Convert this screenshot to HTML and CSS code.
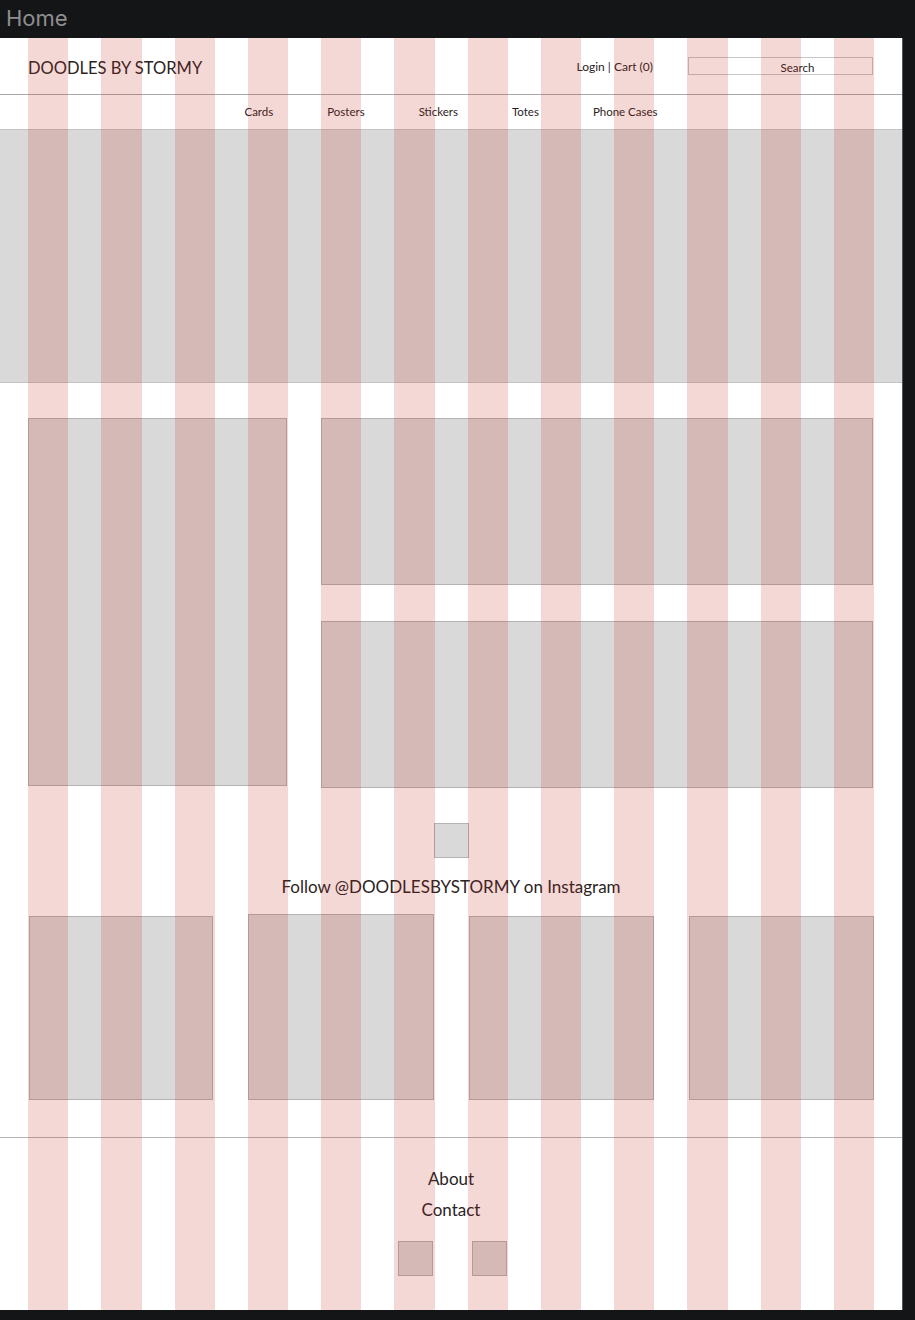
FILE: index.html
```html
<!DOCTYPE html>
<html lang="en">
<head>
    <meta charset="UTF-8">
    <meta name="viewport" content="width=device-width, initial-scale=1.0">
    <title>Home</title>
    <link rel="stylesheet" href="styles.css">
</head>
<body>
    <div class="frame-label">Home</div>
    <div class="frame">
        <header class="header">
            <div class="logo">DOODLES BY STORMY</div>
            <div class="account">Login | Cart (0)</div>
            <div class="search">Search</div>
        </header>
        <nav class="nav">
            <a href="#">Cards</a>
            <a href="#">Posters</a>
            <a href="#">Stickers</a>
            <a href="#">Totes</a>
            <a href="#">Phone Cases</a>
        </nav>
        <div class="hero"></div>

        <section class="features">
            <div class="box feature-tall"></div>
            <div class="box feature-wide"></div>
            <div class="box feature-wide"></div>
        </section>

        <section class="insta">
            <div class="box insta-icon"></div>
            <p class="insta-text">Follow @DOODLESBYSTORMY on Instagram</p>
            <div class="insta-grid">
                <div class="box tile"></div>
                <div class="box tile tile-raised"></div>
                <div class="box tile"></div>
                <div class="box tile"></div>
            </div>
        </section>

        <footer class="footer">
            <a href="#">About</a>
            <a href="#">Contact</a>
            <div class="socials">
                <div class="box social"></div>
                <div class="box social"></div>
            </div>
        </footer>

        <div class="grid-overlay">
            <span></span><span></span><span></span><span></span>
            <span></span><span></span><span></span><span></span>
            <span></span><span></span><span></span><span></span>
        </div>
    </div>
</body>
</html>
```

FILE: styles.css
```css
body {
    margin: 0;
    background: #141517;
    font-family: Lato, "Noto Sans", sans-serif;
    color: #2b2323;
    height: 1320px;
    overflow: hidden;
}

.frame-label {
    height: 38px;
    padding-left: 6px;
    font-family: Inter, sans-serif;
    font-size: 22px;
    line-height: 36px;
    color: #8e8e8e;
}

.frame {
    position: relative;
    width: 902px;
    height: 1272px;
    background: #fff;
    border-right: 1px solid #555;
}

a {
    color: inherit;
    text-decoration: none;
}

.header {
    display: flex;
    align-items: center;
    height: 56px;
    padding: 0 29px 0 28px;
    border-bottom: 1px solid #a9a9a9;
}

.logo {
    padding-top: 3px;
    font-size: 16.5px;
}

.account {
    margin-left: auto;
    margin-right: 35px;
    font-size: 12px;
}

.search {
    box-sizing: border-box;
    width: 185px;
    height: 18px;
    padding-left: 34px;
    border: 1px solid #c6c6c6;
    font-size: 11.5px;
    line-height: 19px;
    text-align: center;
}

.nav {
    display: flex;
    justify-content: center;
    align-items: center;
    gap: 54px;
    height: 34px;
    padding-bottom: 2px;
    box-sizing: border-box;
    font-size: 11.5px;
}

.hero {
    height: 252px;
    background: #d9d9d9;
    border-top: 1px solid #c4c4c4;
    border-bottom: 1px solid #c4c4c4;
}

.box {
    box-sizing: border-box;
    background: #d9d9d9;
    border: 1px solid #b3b3b3;
}

.features {
    display: grid;
    grid-template-columns: 259px 552px;
    grid-template-rows: 167px 167px;
    column-gap: 34px;
    row-gap: 36px;
    padding: 35px 29px 0 28px;
}

.feature-tall {
    grid-row: 1 / 3;
    height: 368px;
}

.insta {
    display: flex;
    flex-direction: column;
    align-items: center;
    padding-top: 35px;
}

.insta-icon {
    width: 35px;
    height: 35px;
}

.insta-text {
    margin: 19px 0 0;
    font-size: 17px;
    line-height: 20px;
}

.insta-grid {
    display: grid;
    grid-template-columns: 184px 186px 185px 185px;
    column-gap: 35px;
    align-items: end;
    margin-top: 17px;
    margin-left: 1px;
}

.tile {
    height: 184px;
}

.tile-raised {
    height: 186px;
}

.footer {
    display: flex;
    flex-direction: column;
    align-items: center;
    margin-top: 37px;
    border-top: 1px solid #b5b5b5;
    padding-top: 31px;
    font-size: 17px;
    line-height: 20px;
}

.footer a {
    margin-bottom: 11px;
}

.socials {
    display: flex;
    gap: 39px;
    margin-top: 10px;
    margin-left: 2px;
}

.social {
    width: 35px;
    height: 35px;
}

.grid-overlay {
    position: absolute;
    inset: 0;
    display: grid;
    grid-template-columns: repeat(12, 1fr);
    column-gap: 33px;
    padding: 0 28px;
    pointer-events: none;
}

.grid-overlay span {
    background: rgba(190, 40, 28, 0.18);
}
```
